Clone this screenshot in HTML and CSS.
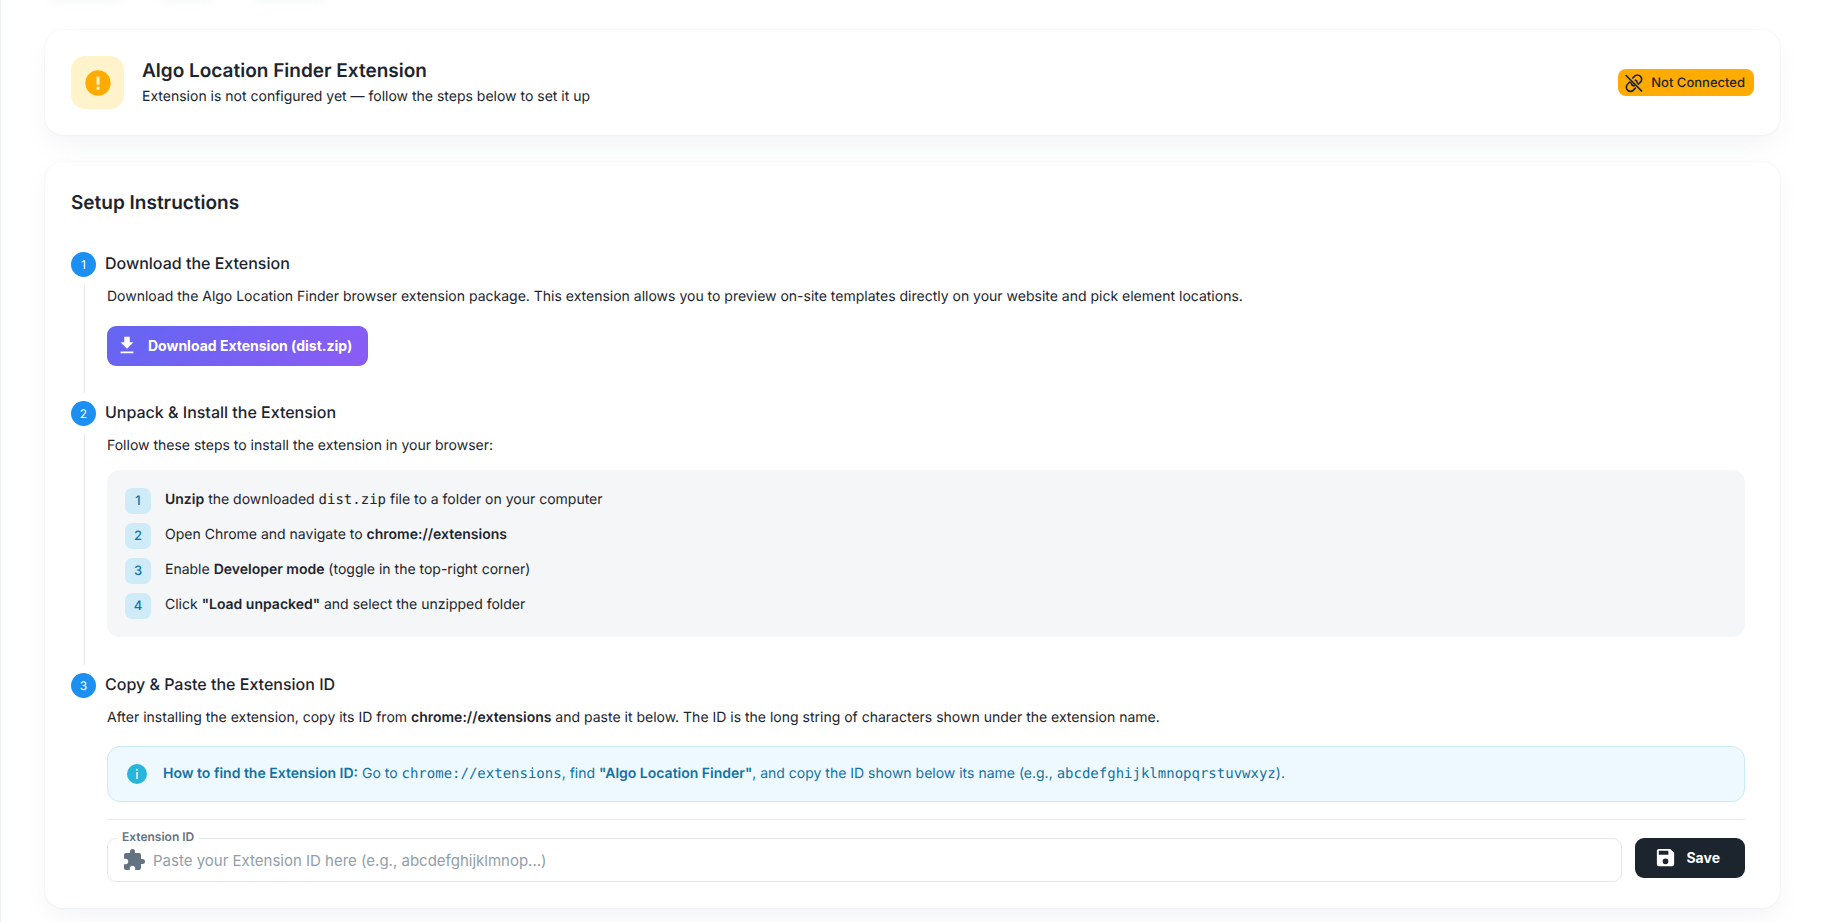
FILE: index.html
```html
<!DOCTYPE html>
<html lang="en">
<head>
    <meta charset="UTF-8">
    <meta name="viewport" content="width=device-width, initial-scale=1.0">
    <title>Algo Location Finder Extension</title>
    <link rel="stylesheet" href="styles.css">
</head>
<body>
    <main class="page">
        <div class="tabs">
            <span class="tab"></span>
            <span class="tab tab-small"></span>
            <span class="tab"></span>
        </div>

        <section class="card status-card">
            <div class="status-icon">
                <svg viewBox="0 0 24 24" width="28" height="28">
                    <path fill="#ffab00" fill-rule="evenodd" d="M8.200 1.800a11 11 0 0 1 7.600 0 11 11 0 0 1 6.400 6.400 11 11 0 0 1 0 7.600 11 11 0 0 1-6.400 6.400 11 11 0 0 1-7.600 0 11 11 0 0 1-6.400-6.400 11 11 0 0 1 0-7.600 11 11 0 0 1 6.400-6.400zM10.700 6.500v7h2.600v-7zm0 8.700v2.600h2.600v-2.600z"/>
                </svg>
            </div>
            <div class="status-text">
                <h1>Algo Location Finder Extension</h1>
                <p>Extension is not configured yet — follow the steps below to set it up</p>
            </div>
            <span class="badge">
                <svg viewBox="0 0 24 24" width="20" height="20" fill="none" stroke="currentColor" stroke-width="2" stroke-linecap="round">
                    <path d="M10.500 6l2-2a4.800 4.800 0 0 1 7.200 0 4.800 4.800 0 0 1 0 7l-2.500 2.500M7 10.800l-2.700 2.700a4.800 4.800 0 0 0 0 7 4.800 4.800 0 0 0 7 0l2.200-2.300M13.500 8.500a4.500 4.500 0 0 1 2.500 3.300M8.500 12a4.500 4.500 0 0 0 3.500 3.500M2.500 3l18.500 18.500"/>
                </svg>
                Not Connected
            </span>
        </section>

        <section class="card setup-card">
            <h2>Setup Instructions</h2>

            <div class="step">
                <div class="step-header">
                    <span class="step-number">1</span>
                    <h3>Download the Extension</h3>
                </div>
                <div class="step-content">
                    <p>Download the Algo Location Finder browser extension package. This extension allows you to preview on-site templates directly on your website and pick element locations.</p>
                    <button class="btn download-btn" type="button">
                        <svg viewBox="0 0 24 24" width="22" height="22" fill="currentColor">
                            <path d="M5 21h14v-2H5v2zM19 9h-4V3H9v6H5l7 7 7-7z"/>
                        </svg>
                        Download Extension (dist.zip)
                    </button>
                </div>
            </div>

            <div class="step">
                <div class="step-header">
                    <span class="step-number">2</span>
                    <h3>Unpack &amp; Install the Extension</h3>
                </div>
                <div class="step-content">
                    <p>Follow these steps to install the extension in your browser:</p>
                    <ol class="install-list">
                        <li><span class="item-number">1</span><span><strong>Unzip</strong> the downloaded <code>dist.zip</code> file to a folder on your computer</span></li>
                        <li><span class="item-number">2</span><span>Open Chrome and navigate to <strong>chrome://extensions</strong></span></li>
                        <li><span class="item-number">3</span><span>Enable <strong>Developer mode</strong> (toggle in the top-right corner)</span></li>
                        <li><span class="item-number">4</span><span>Click <strong>"Load unpacked"</strong> and select the unzipped folder</span></li>
                    </ol>
                </div>
            </div>

            <div class="step">
                <div class="step-header">
                    <span class="step-number">3</span>
                    <h3>Copy &amp; Paste the Extension ID</h3>
                </div>
                <div class="step-content">
                    <p>After installing the extension, copy its ID from <strong>chrome://extensions</strong> and paste it below. The ID is the long string of characters shown under the extension name.</p>
                    <div class="info">
                        <svg viewBox="0 0 24 24" width="24" height="24">
                            <path fill="#28b5dc" fill-rule="evenodd" d="M12 2a10 10 0 1 0 0 20 10 10 0 0 0 0-20zM11.300 10h1.500v7h-1.500zM12 6.800a1 1 0 1 1 0 2 1 1 0 0 1 0-2z"/>
                        </svg>
                        <p><strong>How to find the Extension ID:</strong> Go to <code>chrome://extensions</code>, find <strong>"Algo Location Finder"</strong>, and copy the ID shown below its name (e.g., <code>abcdefghijklmnopqrstuvwxyz</code>).</p>
                    </div>
                    <form class="id-form">
                        <div class="field">
                            <label for="extension-id">Extension ID</label>
                            <svg viewBox="0 0 24 24" width="24" height="24" fill="#637381">
                                <path d="M20.500 11H19V7a2 2 0 0 0-2-2h-4V3.500a2.500 2.500 0 0 0-5 0V5H4a2 2 0 0 0-2 2v3.800h1.500a2.700 2.700 0 0 1 0 5.400H2V20a2 2 0 0 0 2 2h3.800v-1.500a2.700 2.700 0 0 1 5.400 0V22H17a2 2 0 0 0 2-2v-4h1.500a2.500 2.500 0 0 0 0-5z"/>
                            </svg>
                            <input type="text" id="extension-id" placeholder="Paste your Extension ID here (e.g., abcdefghijklmnop...)">
                        </div>
                        <button class="btn save-btn" type="button">
                            <svg viewBox="0 0 24 24" width="23" height="23" fill="currentColor">
                                <path d="M17 3H5a2 2 0 0 0-2 2v14a2 2 0 0 0 2 2h14a2 2 0 0 0 2-2V7l-4-4zm-5 16a3 3 0 1 1 0-6 3 3 0 0 1 0 6zm3-10H5V5h10v4z"/>
                            </svg>
                            Save
                        </button>
                    </form>
                </div>
            </div>
        </section>
    </main>
</body>
</html>
```
FILE: styles.css
```css
* {
    margin: 0;
    padding: 0;
    box-sizing: border-box;
}

body {
    background: #fff;
    color: #1c252e;
    font-family: 'Inter', sans-serif;
    font-size: 14px;
    line-height: 24px;
    text-rendering: geometricPrecision;
}

.page {
    min-height: 100vh;
    border-left: 1px solid #edf0f3;
    padding: 0 44px 14px;
}

.tabs {
    display: flex;
    gap: 40px;
    height: 30px;
    margin-top: -14px;
    padding-left: 4px;
    margin-bottom: 14px;
    overflow: hidden;
}

.tab {
    width: 72px;
    height: 10px;
    border-radius: 8px;
    box-shadow: 0 4px 12px rgba(145, 158, 171, 0.12);
}

.tab-small {
    width: 52px;
}

.card {
    background: #fff;
    border-radius: 18px;
    box-shadow: 0 0 2px rgba(145, 158, 171, 0.2), 0 12px 24px -4px rgba(145, 158, 171, 0.12);
}

.status-card {
    display: flex;
    align-items: center;
    gap: 18px;
    padding: 26px;
}

.status-icon {
    display: flex;
    align-items: center;
    justify-content: center;
    width: 53px;
    height: 53px;
    border-radius: 14px;
    background: #fff3cb;
}

.status-text {
    flex: 1;
    padding-top: 1px;
}

h1,
h2 {
    font-size: 19px;
    font-weight: 600;
    line-height: 28px;
}

.badge {
    display: flex;
    align-items: center;
    gap: 7px;
    height: 27px;
    padding: 0 9px 0 6px;
    border-radius: 8px;
    background: #ffab00;
    font-size: 13px;
    font-weight: 500;
}

.setup-card {
    margin-top: 27px;
    padding: 27px 26px 26px;
}

h2 {
    margin-bottom: 35px;
}

.step-header {
    display: flex;
    gap: 9px;
    height: 25px;
}

.step-number {
    display: flex;
    align-items: center;
    justify-content: center;
    width: 25px;
    height: 25px;
    border-radius: 50%;
    background: #1c8ff2;
    color: #fff;
    font-size: 12px;
}

h3 {
    font-size: 16px;
    font-weight: 500;
    line-height: 22px;
}

.step-content {
    margin: 8px 9px 8px 13px;
    padding: 0 0 27px 22px;
    border-left: 1px solid #e5e8eb;
}

.step:last-child .step-content {
    margin-bottom: 0;
    padding-bottom: 0;
    border-color: transparent;
}

strong {
    font-weight: 600;
}

code {
    font-family: 'DejaVu Sans Mono', monospace;
    font-size: 14px;
}

.btn {
    display: flex;
    align-items: center;
    height: 40px;
    border: none;
    border-radius: 9px;
    color: #fff;
    font-family: inherit;
    font-size: 14px;
    font-weight: 700;
    cursor: pointer;
}

.download-btn {
    gap: 10px;
    margin-top: 17px;
    padding: 0 16px 2px 9px;
    background: linear-gradient(135deg, #6366f1, #8b5cf6);
}

.install-list {
    display: grid;
    gap: 9px;
    margin: 12px 0 1px;
    padding: 18px;
    border-radius: 13px;
    background: #f4f6f8;
    list-style: none;
}

.install-list li {
    display: flex;
    gap: 14px;
}

.item-number {
    display: flex;
    align-items: center;
    justify-content: center;
    width: 26px;
    height: 26px;
    border-radius: 7px;
    background: #d0ebf8;
    color: #1272a4;
    font-size: 13px;
    font-weight: 500;
}

.info {
    display: flex;
    align-items: center;
    gap: 14px;
    height: 56px;
    margin-top: 16px;
    padding: 0 17px;
    border: 1px solid #cbe9f7;
    border-radius: 13px;
    background: #edf9ff;
    color: #1272a4;
}

.id-form {
    display: flex;
    align-items: flex-start;
    gap: 13px;
    margin-top: 17px;
    padding-top: 18px;
    border-top: 1px solid #e8eaed;
}

.field {
    position: relative;
    display: flex;
    flex: 1;
    align-items: center;
    gap: 7px;
    height: 44px;
    padding: 0 14px;
    border: 1px solid #e5e8eb;
    border-radius: 9px;
}

/* label sits on the field's top border */
.field label {
    position: absolute;
    top: -12px;
    left: 9px;
    padding: 0 5px;
    background: #fff;
    color: #637381;
    font-size: 12px;
    font-weight: 600;
    line-height: 20px;
}

.field input {
    flex: 1;
    border: none;
    outline: none;
    background: transparent;
    color: inherit;
    font-family: inherit;
    font-size: 15px;
}

.field input::placeholder {
    color: #919eab;
}

.save-btn {
    gap: 9px;
    padding: 0 25px 2px 19px;
    background: #1c252e;
}
```
